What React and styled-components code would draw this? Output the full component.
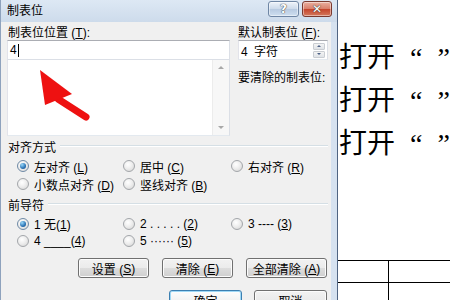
import styled, { createGlobalStyle } from 'styled-components';

const GlobalStyle = createGlobalStyle`
  html, body {
    margin: 0;
    padding: 0;
    width: 450px;
    height: 300px;
    overflow: hidden;
    background: #fff;
  }
  body {
    font-family: "Liberation Sans", "Noto Sans CJK SC", sans-serif;
    font-size: 12px;
    color: #000;
  }
`;

const Screen = styled.div`
  display: flex;
  width: 450px;
  height: 300px;
  overflow: hidden;
`;

const Window = styled.div`
  flex: none;
  width: 338px;
  display: flex;
  flex-direction: column;
  box-sizing: border-box;
  background: linear-gradient(90deg, #c9d8ea, #d6e2f0);
  border-left: 1px solid #8ea2bd;
  border-right: 1px solid #4f6482;
`;

const TitleBar = styled.div`
  height: 22px;
  flex: none;
  display: flex;
  align-items: flex-start;
  padding: 1px 5px 0 6px;
  box-sizing: border-box;
  background: linear-gradient(#dde8f4, #cddbeb);
`;

const Title = styled.div`
  flex: 1;
  line-height: 20px;
  font-size: 12px;
`;

const CaptionButton = styled.div`
  width: ${p => (p.close ? 30 : 31)}px;
  height: 16px;
  box-sizing: border-box;
  margin-left: 3px;
  border-radius: 3px;
  border: 1px solid ${p => (p.close ? '#7a3a30' : '#6f86a4')};
  background: ${p =>
    p.close
      ? 'linear-gradient(#eab0a0, #d9806c 48%, #c5452c 52%, #d47a5e)'
      : 'linear-gradient(#eef3fa, #cddbeb 48%, #b7cae1 52%, #cfdff0)'};
  box-shadow: inset 0 0 0 1px rgba(255, 255, 255, 0.45);
  display: flex;
  align-items: center;
  justify-content: center;
  color: #fff;
  font-family: "DejaVu Sans", sans-serif;
  font-weight: bold;
  font-size: 12px;
  line-height: 1;
  text-shadow: 0 0 1px #333, 0 0 1px #333;
`;

const Body = styled.div`
  flex: 1;
  margin-right: 6px;
  background: #f0f0f0;
  padding: 5px 3px 0 6px;
  display: flex;
  flex-direction: column;
`;

const TopGrid = styled.div`
  display: grid;
  grid-template-columns: 223px 90px;
  column-gap: 8px;
`;

const Column = styled.div`
  display: flex;
  flex-direction: column;
`;

const Label = styled.div`
  line-height: 13px;
  height: 13px;
  white-space: nowrap;
  margin-top: ${p => p.gap || 0}px;
  margin-left: ${p => p.indent || 0}px;
`;

const TextBox = styled.div`
  position: relative;
  height: 20px;
  box-sizing: border-box;
  border: 1px solid #abadb3;
  border-color: #abadb3 #dbdfe6 #e3e9ef #e2e3ea;
  background: #fff;
  display: flex;
  align-items: center;
  padding-left: 2px;
  white-space: nowrap;
`;

const Caret = styled.span`
  display: inline-block;
  width: 1px;
  height: 13px;
  background: #000;
  margin-left: 1px;
`;

const ListBox = styled.div`
  position: relative;
  margin-top: -1px;
  height: 77px;
  box-sizing: border-box;
  border: 1px solid #abadb3;
  border-color: #dbdfe6 #dbdfe6 #e3e9ef #e2e3ea;
  background: #fff;
  display: flex;
  justify-content: flex-end;
`;

const ScrollBar = styled.div`
  width: 16px;
  background: #f7f7f7;
  border-left: 1px solid #ececec;
  display: flex;
  flex-direction: column;
  justify-content: space-between;
  align-items: center;
  padding: 6px 0;
`;

const Tri = styled.span`
  width: 0;
  height: 0;
  border-left: 3px solid transparent;
  border-right: 3px solid transparent;
  ${p => (p.down ? 'border-top: 3px solid #a8a8a8;' : 'border-bottom: 3px solid #a8a8a8;')}
`;

const ArrowMark = styled.svg`
  position: absolute;
  left: 0;
  top: 0;
  overflow: visible;
`;

const SpinBox = styled(TextBox)`
  justify-content: space-between;
  padding-right: 2px;
  word-spacing: 3px;
`;

const SpinButtons = styled.div`
  display: flex;
  flex-direction: column;
  gap: 1px;
`;

const SpinButton = styled.div`
  width: 12px;
  height: 7px;
  box-sizing: border-box;
  border: 1px solid #c9cdd2;
  border-radius: 1px;
  background: linear-gradient(#f4f4f4, #dfe3e7);
  display: flex;
  align-items: center;
  justify-content: center;
`;

const SmallTri = styled.span`
  width: 0;
  height: 0;
  border-left: 2px solid transparent;
  border-right: 2px solid transparent;
  ${p => (p.down ? 'border-top: 2px solid #4d6185;' : 'border-bottom: 2px solid #4d6185;')}
`;

const GroupHeader = styled.div`
  display: flex;
  align-items: center;
  gap: 4px;
  height: 14px;
  line-height: 14px;
  margin-top: ${p => p.gap}px;
  padding-left: 1px;
  &::after {
    content: '';
    flex: 1;
    height: 1px;
    background: #d5dfe5;
    border-bottom: 1px solid #fff;
    margin-top: -4px;
  }
`;

const RadioGrid = styled.div`
  display: grid;
  grid-template-columns: 106px 108px auto;
  grid-auto-rows: ${p => p.row}px;
  margin-top: 2px;
  padding-left: 10px;
`;

const RadioItem = styled.label`
  display: flex;
  align-items: center;
  gap: 5px;
  white-space: nowrap;
`;

const RadioCircle = styled.span`
  flex: none;
  width: 12px;
  height: 12px;
  box-sizing: border-box;
  border-radius: 50%;
  border: 1px solid ${p => (p.checked ? '#6f8aa6' : '#a3a6aa')};
  background: radial-gradient(circle at 40% 35%, #ffffff 0%, #eeeeee 45%, #d2d2d2 100%);
  display: flex;
  align-items: center;
  justify-content: center;
  &::after {
    content: '';
    display: ${p => (p.checked ? 'block' : 'none')};
    width: 6px;
    height: 6px;
    border-radius: 50%;
    background: radial-gradient(circle at 35% 30%, #9ad8fa, #2b73b4 60%, #174c82);
  }
`;

const ButtonRow = styled.div`
  display: flex;
  justify-content: flex-end;
  gap: ${p => p.spacing}px;
  margin-top: ${p => p.gap}px;
  padding-right: 1px;
`;

const Button = styled.div`
  width: ${p => p.w}px;
  height: 20px;
  flex: none;
  box-sizing: border-box;
  border-radius: 3px;
  border: 1px solid ${p => (p.primary ? '#3c7fb1' : '#707070')};
  background: ${p =>
    p.primary
      ? 'linear-gradient(#fdfdfd, #f3f3f3 50%, #e9e9e9 51%, #e2e2e2)'
      : 'linear-gradient(#f2f2f2, #ebebeb 50%, #dddddd 51%, #cfcfcf)'};
  box-shadow: inset 0 0 0 1px ${p => (p.primary ? '#9fd8f6' : '#fcfcfc')};
  display: flex;
  align-items: center;
  justify-content: center;
  white-space: nowrap;
  padding-top: 1px;
`;

const Document = styled.div`
  flex: 1;
  background: #fff;
  padding-top: 36px;
  display: flex;
  flex-direction: column;
`;

const DocLine = styled.div`
  font-family: "Liberation Serif", "Noto Sans CJK SC", serif;
  font-size: 28px;
  line-height: 43px;
  height: 43px;
  padding-left: 1px;
  word-spacing: 8px;
  white-space: nowrap;
`;

const DocTable = styled.table`
  margin-top: 95px;
  border-collapse: collapse;
  width: 120px;
  td {
    height: 21px;
    padding: 0;
    border-top: 1px solid #000;
  }
  td + td {
    border-left: 1px solid #000;
  }
`;

const Key = ({ k }) => (
  <>
    (<u>{k}</u>)
  </>
);

const alignOptions = [
  { text: '左对齐 ', key: 'L', checked: true },
  { text: '居中 ', key: 'C' },
  { text: '右对齐 ', key: 'R' },
  { text: '小数点对齐 ', key: 'D' },
  { text: '竖线对齐 ', key: 'B' },
];

const leaderOptions = [
  { text: '1 无', key: '1', checked: true },
  { text: '2 . . . . . ', key: '2' },
  { text: '3 ---- ', key: '3' },
  { text: '4 ____', key: '4' },
  { text: '5 ······ ', key: '5' },
];

function RadioGroup({ options, row }) {
  return (
    <RadioGrid row={row}>
      {options.map(o => (
        <RadioItem key={o.key}>
          <RadioCircle checked={o.checked} />
          <span>
            {o.text}
            <Key k={o.key} />
          </span>
        </RadioItem>
      ))}
    </RadioGrid>
  );
}

export default function App() {
  return (
    <Screen>
      <GlobalStyle />
      <Window>
        <TitleBar>
          <Title>制表位</Title>
          <CaptionButton>?</CaptionButton>
          <CaptionButton close>✕</CaptionButton>
        </TitleBar>
        <Body>
          <TopGrid>
            <Column>
              <Label indent={1}>
                制表位位置 <Key k="T" />:
              </Label>
              <TextBox>
                4<Caret />
              </TextBox>
              <ListBox>
                <ArrowMark width="90" height="65" viewBox="0 0 90 65">
                  <line x1="50" y1="39" x2="78" y2="57" stroke="#ee1111" strokeWidth="7" strokeLinecap="round" />
                  <polygon points="32,10 64,34 37,45" fill="#ee1111" />
                </ArrowMark>
                <ScrollBar>
                  <Tri />
                  <Tri down />
                </ScrollBar>
              </ListBox>
            </Column>
            <Column>
              <Label>
                默认制表位 <Key k="F" />:
              </Label>
              <SpinBox>
                <span>4 字符</span>
                <SpinButtons>
                  <SpinButton>
                    <SmallTri />
                  </SpinButton>
                  <SpinButton>
                    <SmallTri down />
                  </SpinButton>
                </SpinButtons>
              </SpinBox>
              <Label gap={12}>要清除的制表位:</Label>
            </Column>
          </TopGrid>

          <GroupHeader gap={5}>对齐方式</GroupHeader>
          <RadioGroup options={alignOptions} row={18} />

          <GroupHeader gap={6}>前导符</GroupHeader>
          <RadioGroup options={leaderOptions} row={17} />

          <ButtonRow gap={9} spacing={13}>
            <Button w={71}>
              设置 <Key k="S" />
            </Button>
            <Button w={71}>
              清除 <Key k="E" />
            </Button>
            <Button w={81}>
              全部清除 <Key k="A" />
            </Button>
          </ButtonRow>
          <ButtonRow gap={12} spacing={12}>
            <Button w={73} primary>
              确定
            </Button>
            <Button w={73}>取消</Button>
          </ButtonRow>
        </Body>
      </Window>
      <Document>
        <DocLine>打开 “ ”</DocLine>
        <DocLine>打开 “ ”</DocLine>
        <DocLine>打开 “ ”</DocLine>
        <DocTable>
          <tbody>
            <tr>
              <td style={{ width: 50 }} />
              <td />
            </tr>
            <tr>
              <td />
              <td />
            </tr>
          </tbody>
        </DocTable>
      </Document>
    </Screen>
  );
}
